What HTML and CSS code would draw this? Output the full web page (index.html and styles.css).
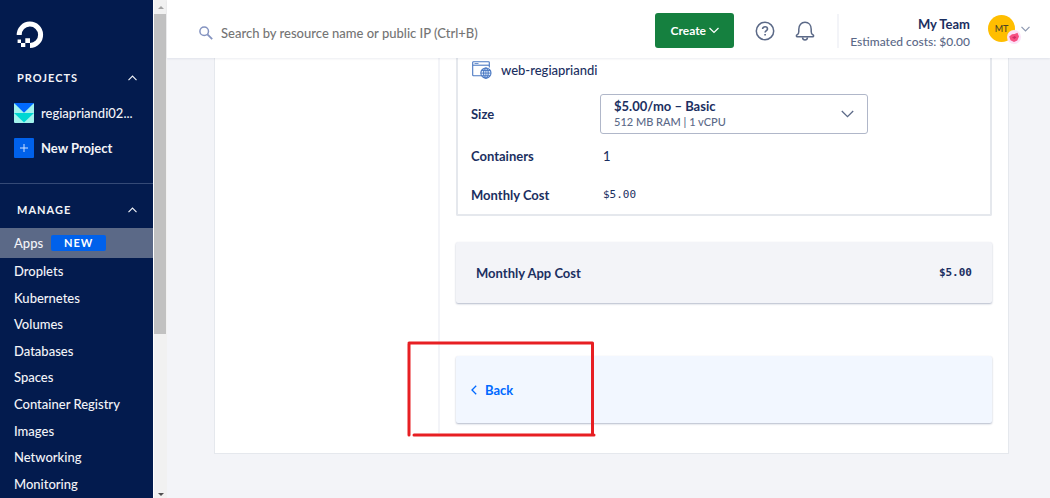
FILE: index.html
```html
<!DOCTYPE html>
<html lang="en">
<head>
<meta charset="utf-8">
<meta name="viewport" content="width=device-width, initial-scale=1">
<title>Apps</title>
<link rel="stylesheet" href="styles.css">
</head>
<body>
<div class="app">
  <aside class="sidebar">
    <a class="logo" href="#" aria-label="Home">
      <svg width="28" height="28" viewBox="0 0 28 28">
        <path d="M3.200 14A10.700 10.700 0 1 1 14 24.500" fill="none" stroke="#fff" stroke-width="5"/>
        <path d="M9.300 17.300h4.700v4.700H9.300zM5 22h4.300v4H5zM1.600 18.600H5V22H1.600z" fill="#fff"/>
      </svg>
    </a>
    <button class="section-title" type="button">PROJECTS
      <svg width="9" height="6" viewBox="0 0 9 6"><path d="M.5 5.200 4.500 1l4 4.200" fill="none" stroke="currentColor" stroke-width="1.100"/></svg>
    </button>
    <ul class="projects">
      <li><a class="project" href="#">
        <svg width="20" height="20" viewBox="0 0 20 20">
          <rect width="20" height="20" rx="1" fill="#a2f3ec"/>
          <path d="M0 0h20L10 9.700z" fill="#0069ff"/>
          <path d="M0 10h20L10 19.500z" fill="#00d7d2"/>
        </svg>
        <span class="project-name">regiapriandi02...</span></a></li>
      <li><a class="project strong" href="#">
        <svg width="20" height="20" viewBox="0 0 20 20">
          <rect width="20" height="20" rx="1" fill="#0061eb"/>
          <path d="M10 6v8M6 10h8" stroke="#cfe1ff" stroke-width="1"/>
        </svg>
        <span class="project-name">New Project</span></a></li>
    </ul>
    <button class="section-title manage" type="button">MANAGE
      <svg width="9" height="6" viewBox="0 0 9 6"><path d="M.5 5.200 4.500 1l4 4.200" fill="none" stroke="currentColor" stroke-width="1.100"/></svg>
    </button>
    <nav class="menu">
      <a class="active" href="#">Apps <span class="tag">NEW</span></a>
      <div class="menu-list">
        <a href="#">Droplets</a>
        <a href="#">Kubernetes</a>
        <a href="#">Volumes</a>
        <a href="#">Databases</a>
        <a href="#">Spaces</a>
        <a href="#">Container Registry</a>
        <a href="#">Images</a>
        <a href="#">Networking</a>
        <a href="#">Monitoring</a>
      </div>
    </nav>
  </aside>
  <div class="scrollbar" aria-hidden="true">
    <svg width="6" height="14" viewBox="0 0 6 14"><path d="M0 9h6L3 6z" fill="#a3a3a3"/></svg>
    <div class="track"><div class="thumb"></div></div>
    <svg width="6" height="6" viewBox="0 0 6 6"><path d="M0 1h6L3 4z" fill="#505050"/></svg>
  </div>
  <div class="page">
    <header class="topbar">
      <label class="search">
        <svg width="14" height="14" viewBox="0 0 14 14" fill="none" stroke="#8493c0" stroke-width="1.500" aria-hidden="true"><circle cx="5.200" cy="5.200" r="4.300"/><path d="M8.400 8.400 13.200 13.200" stroke-width="1.800"/></svg>
        <input type="search" aria-label="Search" placeholder="Search by resource name or public IP (Ctrl+B)">
      </label>
      <button class="create" type="button">Create
        <svg width="10" height="7" viewBox="0 0 10 7"><path d="M.5 1 5 5.500 9.500 1" fill="none" stroke="#fff" stroke-width="1.200"/></svg>
      </button>
      <button class="icon-button" type="button" aria-label="Help">
        <svg width="20" height="20" viewBox="0 0 20 20" fill="none" stroke="#5b6987" stroke-width="1.500"><circle cx="10" cy="10" r="8.700"/><path d="M7.600 8.100c0-3.300 4.900-3 4.900-.2 0 1.800-2.400 1.700-2.400 3.700" stroke-width="1.600"/><path d="M10.100 12.900v1.700" stroke-width="1.700"/></svg>
      </button>
      <button class="icon-button" type="button" aria-label="Notifications">
        <svg width="20" height="20" viewBox="0 0 20 20" fill="none" stroke="#5b6987" stroke-width="1.500" stroke-linejoin="round"><path d="M2 15.800c-.9-.4-.8-1.700.2-2 1.400-.5 1.600-1.500 1.600-3.300V8.200C3.800 4 6.300 1.300 10 1.300s6.200 2.700 6.200 6.900v2.300c0 1.800.2 2.800 1.600 3.300 1 .3 1.100 1.600.2 2z"/><path d="M7.500 16.300c.4 3.500 4.600 3.500 5 0"/></svg>
      </button>
      <div class="account">
        <div class="account-text">
          <strong>My Team</strong>
          <span>Estimated costs: $0.00</span>
        </div>
        <button class="avatar" type="button" aria-label="Account menu">
          <span class="initials">MT</span>
          <svg class="team-badge" width="14" height="14" viewBox="0 0 14 14"><circle cx="7" cy="7" r="7" fill="#fce3f8"/><path d="M2.200 6.500 5 4.200 7.500 4 10.500 2.800 12 6.500 10.300 10.500 7 12 3.500 10.300z" fill="#f65083"/><path d="M5 7.500 7.800 6l1.500 1.500L7.500 9z" fill="#cf2a66"/></svg>
        </button>
        <svg width="9" height="6" viewBox="0 0 9 6"><path d="M.5.8 4.500 5l4-4.200" fill="none" stroke="#8d98b0" stroke-width="1.200"/></svg>
      </div>
    </header>
    <main class="content">
      <section class="sheet">
        <div class="steps"></div>
        <div class="details">
          <div class="resource">
            <div class="resource-name">
              <svg width="20" height="18" viewBox="0 0 20 18" fill="none" stroke="#4a78c2" stroke-width="1.100"><path d="M9.500 14.700H1.400a.7.700 0 0 1-.7-.7V1.400A.7.700 0 0 1 1.400.7h15.200a.7.700 0 0 1 .7.700v5"/><path d="M.7 4.200h16.600" /><path d="M2.500 2.500h4" stroke-width=".8"/><circle cx="13.900" cy="12.100" r="5.100" fill="#e6f1ff"/><ellipse cx="13.900" cy="12.100" rx="2.300" ry="5.100"/><path d="M13.900 7v10.200M8.800 12.100H19M9.700 9.500h8.400M9.700 14.700h8.400" stroke-width=".9"/></svg>
              <span>web-regiapriandi</span>
            </div>
            <div class="field">
              <label for="size">Size</label>
              <div class="size-picker">
                <select id="size"><option>$5.00/mo – Basic</option></select>
                <span class="size-note">512 MB RAM | 1 vCPU</span>
                <svg class="size-arrow" width="13" height="8" viewBox="0 0 13 8"><path d="M.8 1 6.500 6.700 12.200 1" fill="none" stroke="#5b6987" stroke-width="1.300"/></svg>
              </div>
            </div>
            <dl class="facts">
              <div class="field"><dt>Containers</dt><dd>1</dd></div>
              <div class="field"><dt>Monthly Cost</dt><dd class="price">$5.00</dd></div>
            </dl>
          </div>
          <div class="total">
            <span>Monthly App Cost</span>
            <span class="price">$5.00</span>
          </div>
          <div class="actions">
            <button class="back" type="button">
              <svg width="6" height="10" viewBox="0 0 6 10"><path d="M5.200.8 1 5l4.200 4.200" fill="none" stroke="currentColor" stroke-width="1.300"/></svg>
              Back</button>
            <svg class="marker" width="190" height="98" viewBox="0 0 190 98" fill="none" stroke="#e71f23" stroke-width="3" stroke-linecap="round" aria-hidden="true"><path d="M3 95V4M3 3H186.500M186.500 3V94M8 95H188"/></svg>
          </div>
        </div>
      </section>
    </main>
  </div>
</div>
</body>
</html>
```
FILE: styles.css
```css
* { box-sizing: border-box; }

body {
  margin: 0;
  font-family: Lato, "Open Sans", sans-serif;
  font-size: 13px;
  line-height: 16px;
  font-weight: 500;
  color: #1b2f61;
}

button, input, select { font: inherit; color: inherit; }
button { border: 0; padding: 0; background: none; cursor: pointer; }
a { color: inherit; text-decoration: none; }
ul, dl, dd { margin: 0; padding: 0; list-style: none; }
svg { display: block; flex: none; }

.app {
  display: flex;
  height: 100vh;
  overflow: hidden;
}

.sidebar {
  flex: none;
  width: 153px;
  overflow: hidden;
  background: #031b4e;
  color: #f3f4f8;
}

.logo { display: block; padding: 21px 16px 20px; }

.section-title {
  display: flex;
  align-items: center;
  justify-content: space-between;
  width: 100%;
  padding: 0 16px 0 17px;
  font-size: 11px;
  line-height: 18px;
  font-weight: 700;
  letter-spacing: 1px;
}

.projects {
  display: grid;
  gap: 15px;
  padding: 16px 14px 25px 14px;
  border-bottom: 1px solid #354a76;
}

.project { display: flex; align-items: center; gap: 7px; }
.project-name { white-space: nowrap; line-height: 20px; }
.strong { font-weight: 700; }
.manage { padding-top: 17px; padding-bottom: 9px; }

.menu a { display: flex; align-items: center; padding-left: 14px; }
.menu .active { height: 30px; gap: 8px; background: #5b6987; }

.tag {
  width: 55px;
  border-radius: 2px;
  background: #0061eb;
  font-size: 11px;
  font-weight: 700;
  letter-spacing: 1px;
  text-align: center;
  color: #fff;
}

.menu-list {
  display: grid;
  grid-auto-rows: 1fr;
  height: 239px;
}

.scrollbar {
  flex: none;
  display: flex;
  flex-direction: column;
  align-items: center;
  width: 14px;
  background: #f1f1f1;
  border-left: 1px solid #fff;
}

.track { flex: 1; width: 100%; padding: 0 1px 0 0; }
.thumb { height: 67%; background: #c1c1c1; }

.page {
  flex: 1;
  min-width: 0;
  display: flex;
  flex-direction: column;
  background: #f3f4f8;
}

.topbar {
  position: relative;
  display: flex;
  align-items: center;
  flex: none;
  height: 58px;
  padding: 3px 20px 0 32px;
  background: #fff;
  box-shadow: 0 1px 2px rgba(3, 27, 78, 0.08);
}

.search { flex: 1; display: flex; align-items: center; gap: 8px; padding-top: 5px; }
.search input {
  flex: 1;
  min-width: 0;
  border: 0;
  padding: 0;
  outline: 0;
  background: none;
}
.search input::placeholder { color: #757575; }

.create {
  display: flex;
  align-items: center;
  justify-content: center;
  gap: 3px;
  width: 79px;
  height: 35px;
  margin-right: 21px;
  border-radius: 3px;
  background: #15803f;
  color: #fff;
  font-size: 12px;
  font-weight: 700;
}

.icon-button { margin-right: 20px; }

.account {
  display: flex;
  align-items: center;
  gap: 6px;
  height: 34px;
  margin-left: 2px;
  padding-left: 11px;
  border-left: 2px solid #f3f4f8;
}

.account-text {
  display: flex;
  flex-direction: column;
  align-items: flex-end;
  margin-right: 12px;
  padding-top: 4px;
  line-height: 17px;
}
.account-text span { font-size: 12px; color: #5b6987; }

.avatar { position: relative; }
.initials {
  display: block;
  width: 27px;
  border-radius: 50%;
  background: #ffbe00;
  font-size: 9px;
  line-height: 27px;
  color: #4b4325;
}
.account .avatar { margin-bottom: 4px; }
.account > svg { margin-bottom: 4px; }
.team-badge { position: absolute; right: -6px; bottom: -2px; }

.content { padding: 0 41px 0 47px; }

.sheet {
  display: flex;
  border: 1px solid #e5e8ed;
  border-top: 0;
  background: #fff;
}

.steps { flex: 0 0 225px; margin-bottom: 20px; border-right: 2px solid #f3f4f8; }
.details { flex: 1; padding: 0 16px 30px; }

.resource {
  padding: 1px 13px 0;
  border: 2px solid #e5e8ed;
  border-top: 0;
  border-radius: 0 0 2px 2px;
  font-weight: 700;
}

.resource-name {
  display: flex;
  align-items: center;
  gap: 9px;
  height: 22px;
  margin-bottom: 13px;
  padding-left: 1px;
  font-weight: 500;
}

.field { display: grid; grid-template-columns: 129px 1fr; align-items: center; }
.facts .field { height: 39px; }
.facts { padding-top: 2px; }
.facts dd { padding-left: 3px; font-weight: 500; }

.size-picker { position: relative; width: 268px; }
.size-picker select {
  display: block;
  width: 100%;
  height: 40px;
  padding: 0 30px 16px 13px;
  border: 1px solid #b0b7c9;
  border-radius: 3px;
  appearance: none;
  background: #fff;
}
.size-note {
  position: absolute;
  left: 14px;
  bottom: 4px;
  font-size: 11px;
  font-weight: 500;
  color: #5b6987;
  pointer-events: none;
}
.size-arrow { position: absolute; right: 14px; top: 16px; pointer-events: none; }

.price { font-family: "DejaVu Sans Mono", monospace; font-size: 11px; }

.total {
  display: flex;
  align-items: center;
  justify-content: space-between;
  height: 61px;
  margin-top: 26px;
  padding: 0 20px;
  border-radius: 2px;
  background: #f3f4f8;
  box-shadow: 0 1px 2px rgba(3, 27, 78, 0.3);
  font-weight: 700;
}

.actions {
  position: relative;
  display: flex;
  align-items: center;
  height: 67px;
  margin-top: 53px;
  padding: 0 15px;
  border-radius: 2px;
  background: #f2f7ff;
  box-shadow: 0 1px 2px rgba(3, 27, 78, 0.3);
}

.back {
  display: flex;
  align-items: center;
  gap: 8px;
  font-weight: 700;
  color: #0069ff;
}

.marker { position: absolute; left: -50px; top: -16px; pointer-events: none; }
```
